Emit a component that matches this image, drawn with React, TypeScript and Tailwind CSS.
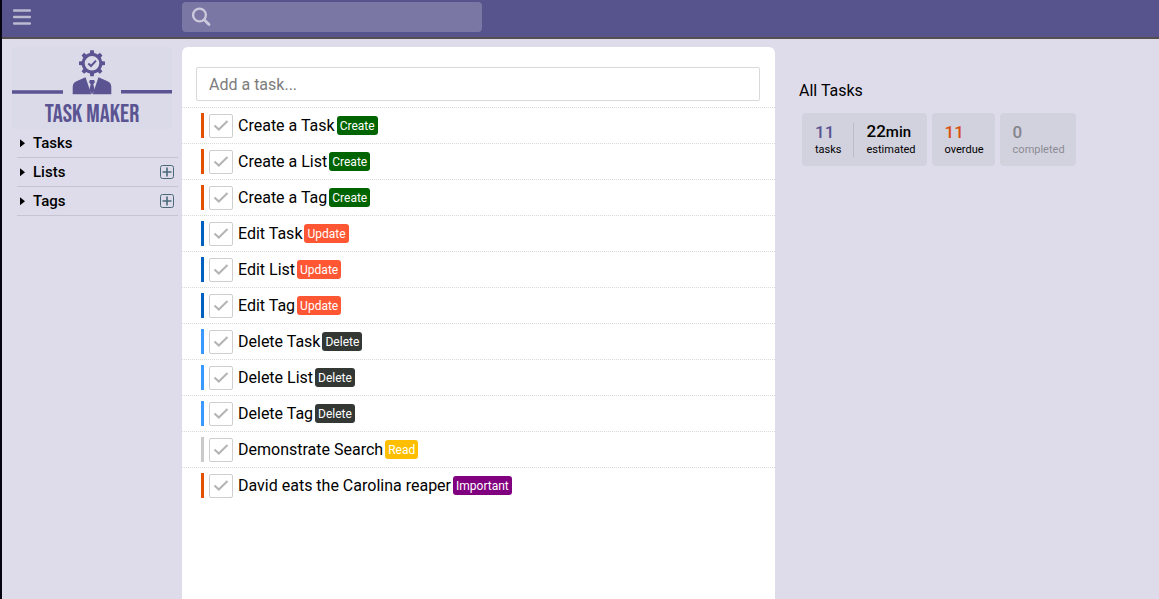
import React from "react";

type Task = { title: string; tag: string; bar: string; tagColor: string };

const orange = "bg-[#e44f00]";
const blue = "bg-[#0060bf]";
const sky = "bg-[#3a99ff]";

const tasks: Task[] = [
  { title: "Create a Task", tag: "Create", bar: orange, tagColor: "bg-[#006400]" },
  { title: "Create a List", tag: "Create", bar: orange, tagColor: "bg-[#006400]" },
  { title: "Create a Tag", tag: "Create", bar: orange, tagColor: "bg-[#006400]" },
  { title: "Edit Task", tag: "Update", bar: blue, tagColor: "bg-[#ff5733]" },
  { title: "Edit List", tag: "Update", bar: blue, tagColor: "bg-[#ff5733]" },
  { title: "Edit Tag", tag: "Update", bar: blue, tagColor: "bg-[#ff5733]" },
  { title: "Delete Task", tag: "Delete", bar: sky, tagColor: "bg-[#333835]" },
  { title: "Delete List", tag: "Delete", bar: sky, tagColor: "bg-[#333835]" },
  { title: "Delete Tag", tag: "Delete", bar: sky, tagColor: "bg-[#333835]" },
  { title: "Demonstrate Search", tag: "Read", bar: "bg-[#cacaca]", tagColor: "bg-[#ffbf00]" },
  { title: "David eats the Carolina reaper", tag: "Important", bar: orange, tagColor: "bg-[#800080]" },
];

function Logo() {
  return (
    <a href="#" className="mx-2.5 flex h-[82px] flex-col items-center bg-[#dbdae8] text-[#5a5492]">
      <svg viewBox="0 0 160 50" className="h-[50px] w-full shrink-0" fill="currentColor" aria-hidden="true">
        <circle cx="80" cy="16.3" r="8.9" fill="none" stroke="currentColor" strokeWidth="3.2" />
        {[0, 45, 90, 135, 180, 225, 270, 315].map((a) => (
          <path key={a} d="M77.700 7.500 L78.200 3.300 H81.800 L82.300 7.500 Z" transform={`rotate(${a} 80 16.3)`} />
        ))}
        <path d="M76.300 16.500 L79 19 L84 13.600" fill="none" stroke="currentColor" strokeWidth="2" />
        <path d="M60.700 47.300 V40 Q60.700 35.500 65 34 L73.500 30.200 L79.300 47.300 Z" />
        <path d="M99.300 47.300 V40 Q99.300 35.500 95 34 L86.500 30.200 L80.700 47.300 Z" />
        <path d="M77.800 33 H82.200 L82.900 35.200 L81.300 37.200 L82.700 43 L80 47.300 L77.300 43 L78.700 37.200 L77.100 35.200 Z" />
        <path d="M0 43.200 H51 V46.800 H0 Z M109 43 H160 V46.600 H109 Z" />
      </svg>
      <span className="mt-1 whitespace-nowrap font-['Bebas_Neue','Roboto_Condensed','Liberation_Sans_Narrow',sans-serif] text-[25px] leading-7">
        TASK MAKER
      </span>
    </a>
  );
}

function SideItem({ label, add }: { label: string; add?: boolean }) {
  return (
    <li className="flex h-[29px] items-center border-b border-[#c5c4d0] pr-1">
      <button type="button" className="flex flex-1 items-center text-left text-[15px] leading-6 font-medium">
        <svg viewBox="0 0 6 10" className="mr-[7px] ml-[3px] h-2.5 w-1.5 shrink-0" aria-hidden="true">
          <path d="M0 1.300 L5 5.300 L0 9.300 Z" />
        </svg>
        {label}
      </button>
      {add && (
        <button type="button" aria-label={`Add ${label}`} className="text-[#49697a]">
          <svg viewBox="0 0 14 14" className="size-3.5" fill="none" stroke="currentColor" aria-hidden="true">
            <rect x=".5" y=".5" width="13" height="13" rx="2" />
            <path d="M7 2.500 V11.500 M2.500 7 H11.500" strokeWidth="1.600" />
          </svg>
        </button>
      )}
    </li>
  );
}

type StatProps = { value: string; unit?: string; label: string; valueClass: string; labelClass?: string };

function Stat({ value, unit, label, valueClass, labelClass = "text-black" }: StatProps) {
  return (
    <div className="flex flex-col">
      <span className={`text-[17px] leading-5 font-medium ${valueClass}`}>
        {value}
        {unit && <span className="text-[15px]">{unit}</span>}
      </span>
      <span className={`text-[11px] leading-4 ${labelClass}`}>{label}</span>
    </div>
  );
}

export default function App() {
  return (
    <div className="flex min-h-screen flex-col border-l-2 border-[#05030f] bg-[#dedceb] font-[Roboto,sans-serif] text-base text-black">
      <header className="flex h-[39px] items-start border-b-2 border-[#55504f] bg-[#57538c]">
        <div className="w-[180px] shrink-0 pt-2 pl-[11px]">
          <button type="button" aria-label="Menu" className="block text-[#bcbad1]">
            <svg viewBox="0 0 18 18" className="size-[18px]" fill="currentColor" aria-hidden="true">
              <rect y="1.300" width="18" height="2.400" rx="1" />
              <rect y="7.800" width="18" height="2.400" rx="1" />
              <rect y="14.300" width="18" height="2.400" rx="1" />
            </svg>
          </button>
        </div>
        <label className="mt-0.5 flex h-[30px] w-[300px] items-center rounded bg-[#7b77a5] px-2.5">
          <svg viewBox="0 0 20 20" className="size-5 shrink-0 text-[#cbc9dc]" fill="none" stroke="currentColor" aria-hidden="true">
            <circle cx="7.500" cy="8" r="6.400" strokeWidth="2.300" />
            <path d="M12.200 12.700 L17 17.500" strokeWidth="2.800" strokeLinecap="round" />
          </svg>
          <input type="search" aria-label="Search" className="ml-1 min-w-0 flex-1 bg-transparent text-white outline-none" />
        </label>
      </header>

      <div className="grid flex-1 grid-cols-[180px_minmax(0,593fr)_minmax(0,384fr)] pt-2">
        <nav>
          <Logo />
          <ul className="mr-1 ml-[15px]">
            <SideItem label="Tasks" />
            <SideItem label="Lists" add />
            <SideItem label="Tags" add />
          </ul>
        </nav>

        <main className="rounded-t-md bg-white pt-5">
          <div className="mr-[15px] mb-1.5 ml-3.5">
            <input
              type="text"
              aria-label="Add a task"
              placeholder="Add a task..."
              className="block h-[34px] w-full rounded-xs border border-[#d9d9d9] px-3 outline-none placeholder:text-[#7c7c7c]"
            />
          </div>
          <ul>
            {tasks.map((t) => (
              <li key={t.title} className="flex h-9 items-center border-t border-dotted border-[#d9d9d9] pl-[19px]">
                <span className={`mr-[5px] h-[25px] w-[3px] ${t.bar}`} />
                <label className="flex items-center">
                  <span className="mr-[5px] grid size-6 place-items-center rounded-xs border border-[#cfcfcf]">
                    <input type="checkbox" className="col-start-1 row-start-1 size-5 appearance-none" />
                    <svg viewBox="0 0 16 16" className="pointer-events-none col-start-1 row-start-1 size-4" fill="none" stroke="#b4b4b4" strokeWidth="2" aria-hidden="true">
                      <path d="M1.500 7.500 L5.800 11.500 L14.500 3" />
                    </svg>
                  </span>
                  {t.title}
                </label>
                <span className={`ml-0.5 rounded-[3px] px-[3px] pt-px text-xs leading-[18px] text-white ${t.tagColor}`}>{t.tag}</span>
              </li>
            ))}
          </ul>
        </main>

        <aside className="pt-8 pl-6">
          <h1 className="leading-6">All Tasks</h1>
          <div className="mt-2.5 ml-[3px] flex gap-[5px]">
            <section className="flex h-[53px] items-center rounded bg-[#d2d1de] pr-[11px] pl-[13px]">
              <Stat value="11" label="tasks" valueClass="text-[#5a5492]" />
              <span className="mr-[13px] ml-[11px] h-[34px] w-px bg-[#bdbccb]" />
              <Stat value="22" unit="min" label="estimated" valueClass="text-black" />
            </section>
            <section className="flex h-[53px] items-center rounded bg-[#d2d1de] pr-[11px] pl-[13px]">
              <Stat value="11" label="overdue" valueClass="text-[#d8500e]" />
            </section>
            <section className="flex h-[53px] items-center rounded bg-[#d2d1de] pr-[11px] pl-[13px]">
              <Stat value="0" label="completed" valueClass="text-[#85858c]" labelClass="text-[#8c8c94]" />
            </section>
          </div>
        </aside>
      </div>
    </div>
  );
}
